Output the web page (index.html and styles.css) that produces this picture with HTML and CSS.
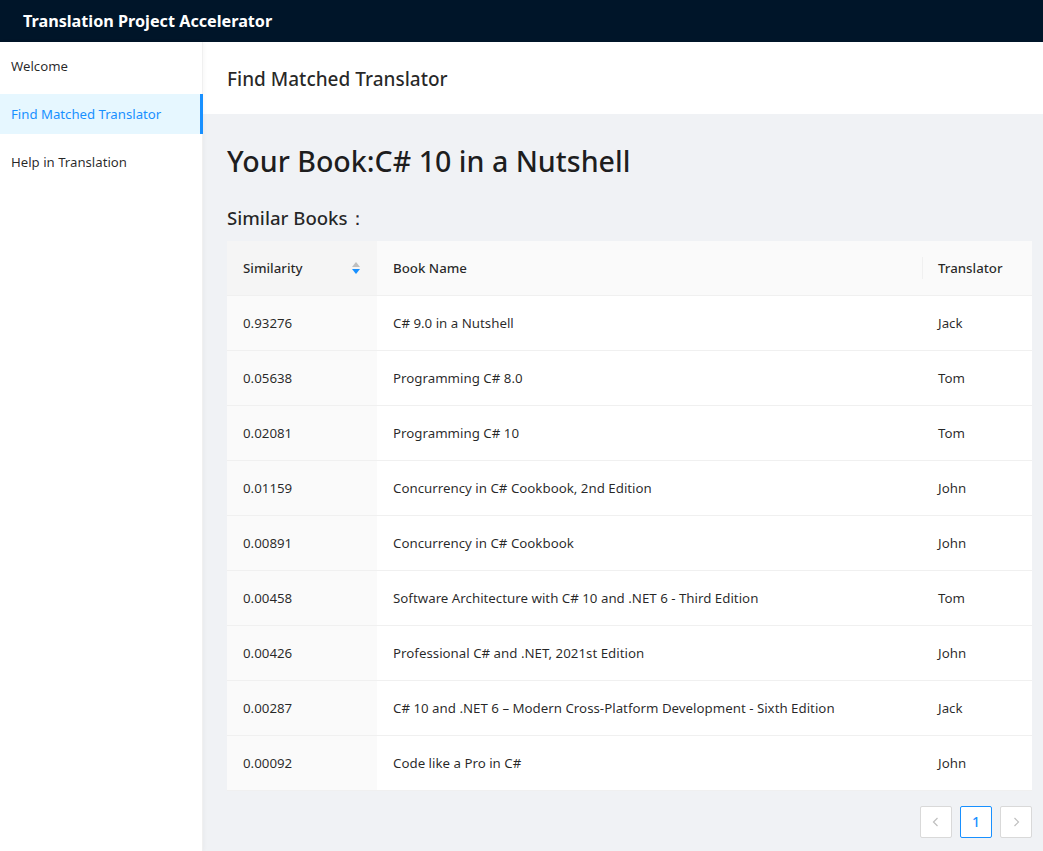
FILE: index.html
```html
<!DOCTYPE html>
<html>
<head>
<meta charset="utf-8">
<link rel="stylesheet" href="styles.css">
</head>
<body>
<header class="topbar">
  <div class="brand">Translation Project Accelerator</div>
</header>
<div class="layout">
  <aside class="sider">
    <ul class="menu">
      <li class="menu-item">Welcome</li>
      <li class="menu-item selected">Find Matched Translator</li>
      <li class="menu-item">Help in Translation</li>
    </ul>
  </aside>
  <main class="main">
    <div class="page-header">Find Matched Translator</div>
    <div class="content">
      <h1 class="book-title">Your Book:C# 10 in a Nutshell</h1>
      <h2 class="sub-title">Similar Books：</h2>
      <table class="table">
        <thead>
          <tr>
            <th class="col-sim sorted-head">
              <div class="sorter">
                <span>Similarity</span>
                <span class="sort-icons">
                  <svg width="8" height="5" viewBox="0 0 8 5"><path d="M0 5 L4 0 L8 5 Z" fill="#bfbfbf"/></svg>
                  <svg width="8" height="5" viewBox="0 0 8 5"><path d="M0 0 L8 0 L4 5 Z" fill="#1890ff"/></svg>
                </span>
              </div>
            </th>
            <th class="col-name">Book Name</th>
            <th class="col-tr"><span class="th-sep"></span>Translator</th>
          </tr>
        </thead>
        <tbody>
          <tr><td class="sorted">0.93276</td><td>C# 9.0 in a Nutshell</td><td>Jack</td></tr>
          <tr><td class="sorted">0.05638</td><td>Programming C# 8.0</td><td>Tom</td></tr>
          <tr><td class="sorted">0.02081</td><td>Programming C# 10</td><td>Tom</td></tr>
          <tr><td class="sorted">0.01159</td><td>Concurrency in C# Cookbook, 2nd Edition</td><td>John</td></tr>
          <tr><td class="sorted">0.00891</td><td>Concurrency in C# Cookbook</td><td>John</td></tr>
          <tr><td class="sorted">0.00458</td><td>Software Architecture with C# 10 and .NET 6 - Third Edition</td><td>Tom</td></tr>
          <tr><td class="sorted">0.00426</td><td>Professional C# and .NET, 2021st Edition</td><td>John</td></tr>
          <tr><td class="sorted">0.00287</td><td>C# 10 and .NET 6 – Modern Cross-Platform Development - Sixth Edition</td><td>Jack</td></tr>
          <tr><td class="sorted">0.00092</td><td>Code like a Pro in C#</td><td>John</td></tr>
        </tbody>
      </table>
      <div class="pagination">
        <button class="page-btn disabled" aria-label="Previous">
          <svg width="12" height="12" viewBox="0 0 12 12"><path d="M7.5 2 L3.5 6 L7.5 10" fill="none" stroke="#bfbfbf" stroke-width="1.2"/></svg>
        </button>
        <button class="page-btn active">1</button>
        <button class="page-btn disabled" aria-label="Next">
          <svg width="12" height="12" viewBox="0 0 12 12"><path d="M4.5 2 L8.5 6 L4.5 10" fill="none" stroke="#bfbfbf" stroke-width="1.2"/></svg>
        </button>
      </div>
    </div>
  </main>
</div>
</body>
</html>
```

FILE: styles.css
```css
* { box-sizing: border-box; }
html, body {
  margin: 0;
  padding: 0;
  height: 100%;
}
body {
  font-family: "Noto Sans", "Open Sans", sans-serif;
  font-size: 13.3px;
  color: rgba(0,0,0,0.85);
  background: #f0f2f5;
  overflow: hidden;
}
.topbar {
  height: 42px;
  background: #001529;
  display: flex;
  align-items: center;
  padding-left: 23px;
}
.brand {
  color: #fff;
  font-weight: 700;
  font-size: 16.2px;
}
.layout {
  display: flex;
  height: calc(100% - 42px);
}
.sider {
  width: 203px;
  flex: none;
  background: #fff;
  border-right: 1px solid #f0f0f0;
  position: relative;
  z-index: 1;
  box-shadow: 1px 0 4px rgba(0,0,0,0.04);
}
.menu {
  list-style: none;
  margin: 0;
  padding: 4px 0 0;
}
.menu-item {
  height: 40px;
  line-height: 40px;
  padding-left: 11px;
  margin-bottom: 8px;
  font-size: 13.2px;
  color: rgba(0,0,0,0.85);
  white-space: nowrap;
}
.menu-item.selected {
  background: #e6f7ff;
  color: #1890ff;
  margin-right: -1px;
  border-right: 3px solid #1890ff;
}
.main {
  flex: 1;
  display: flex;
  flex-direction: column;
  min-width: 0;
}
.page-header {
  height: 72px;
  background: #fff;
  display: flex;
  align-items: center;
  padding-left: 24px;
  padding-top: 1px;
  font-size: 19px;
  font-weight: 500;
  color: rgba(0,0,0,0.85);
}
.content {
  padding: 24px 11px 0 24px;
}
.book-title {
  margin: 3px 0 0;
  font-size: 28.6px;
  font-weight: 500;
  line-height: 40px;
  color: rgba(0,0,0,0.88);
}
.sub-title {
  margin: 23px 0 0;
  font-size: 18.6px;
  font-weight: 500;
  line-height: 28px;
}
.table {
  margin-top: 9px;
  width: 100%;
  border-collapse: collapse;
  background: #fff;
}
.table th {
  background: #fafafa;
  font-weight: 500;
  text-align: left;
  height: 54px;
  padding: 0 16px;
  border-bottom: 1px solid #f0f0f0;
  color: rgba(0,0,0,0.85);
}
.table th.sorted-head {
  background: #f5f5f5;
}
.table td {
  height: 55px;
  padding: 0 16px;
  border-bottom: 1px solid #f0f0f0;
}
.table td.sorted {
  background: #fafafa;
}
.col-sim { width: 150px; }
.col-tr { width: 110px; position: relative; }
.th-sep {
  position: absolute;
  left: 0;
  top: 50%;
  height: 22px;
  margin-top: -11px;
  width: 1px;
  background: #f0f0f0;
}
.sorter {
  display: flex;
  align-items: center;
  justify-content: space-between;
}
.sort-icons {
  display: flex;
  flex-direction: column;
  gap: 2px;
  margin-right: 1px;
}
.sort-icons svg { display: block; }
.pagination {
  display: flex;
  justify-content: flex-end;
  gap: 8px;
  margin-top: 15px;
}
.page-btn {
  width: 32px;
  height: 32px;
  border: 1px solid #d9d9d9;
  border-radius: 2px;
  background: #fff;
  font-family: inherit;
  font-size: 14px;
  color: rgba(0,0,0,0.85);
  display: flex;
  align-items: center;
  justify-content: center;
  padding: 0;
}
.page-btn.active {
  border-color: #1890ff;
  color: #1890ff;
  font-weight: 500;
}
```
